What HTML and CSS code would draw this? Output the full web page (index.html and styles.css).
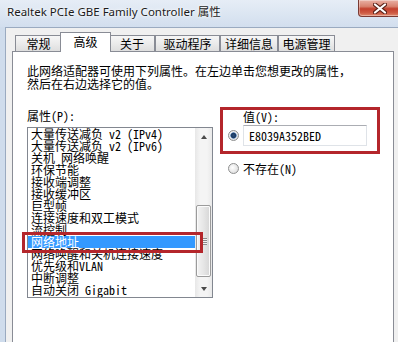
FILE: index.html
```html
<!DOCTYPE html>
<html lang="zh-CN">
<head>
<meta charset="utf-8">
<title>属性</title>
<link rel="stylesheet" href="styles.css">
</head>
<body>
<div class="window">
  <div class="titlebar">
    <span class="title">Realtek PCIe GBE Family Controller 属性</span>
    <div class="close">
      <svg width="14" height="11" viewBox="0 0 14 11">
        <path d="M2,1.5 L12,9.5 M12,1.5 L2,9.5" stroke="#5b2219" stroke-width="4.2" stroke-linecap="round"/>
        <path d="M2,1.5 L12,9.5 M12,1.5 L2,9.5" stroke="#ffffff" stroke-width="2.2" stroke-linecap="round"/>
      </svg>
    </div>
  </div>
  <div class="frame">
    <div class="client">
      <div class="tabs">
        <div class="tab t1">常规</div>
        <div class="tab active t2">高级</div>
        <div class="tab t3">关于</div>
        <div class="tab t4">驱动程序</div>
        <div class="tab t5">详细信息</div>
        <div class="tab t6">电源管理</div>
      </div>
      <div class="panel">
        <p class="desc">此网络适配器可使用下列属性。在左边单击您想更改的属性，<br>然后在右边选择它的值。</p>
        <div class="props">
          <div class="left">
            <div class="label">属性(P):</div>
            <div class="listbox">
              <ul class="items">
                <li>大量传送减负 v2 (IPv4)</li>
                <li>大量传送减负 v2 (IPv6)</li>
                <li>关机 网络唤醒</li>
                <li>环保节能</li>
                <li>接收端调整</li>
                <li>接收缓冲区</li>
                <li>巨型帧</li>
                <li>连接速度和双工模式</li>
                <li>流控制</li>
                <li class="selected">网络地址</li>
                <li>网络唤醒和关机连接速度</li>
                <li>优先级和VLAN</li>
                <li>中断调整</li>
                <li>自动关闭 Gigabit</li>
              </ul>
              <div class="scrollbar">
                <div class="sb-btn"><span class="arrow-up"></span></div>
                <div class="sb-track">
                  <div class="thumb">
                    <span class="grip"></span>
                  </div>
                </div>
                <div class="sb-btn"><span class="arrow-down"></span></div>
              </div>
              <div class="mark-list"></div>
            </div>
          </div>
          <div class="right">
            <div class="valbox">
              <div class="vlabel">值(V):</div>
              <div class="vrow">
                <span class="radio checked"></span>
                <div class="textbox">E8039A352BED</div>
              </div>
            </div>
            <div class="vrow2">
              <span class="radio"></span>
              <span class="vtext">不存在(N)</span>
            </div>
          </div>
        </div>
      </div>
    </div>
  </div>
</div>
</body>
</html>
```
FILE: styles.css
```css
* { box-sizing: border-box; }
html, body { margin: 0; padding: 0; }
body {
  width: 398px;
  height: 342px;
  overflow: hidden;
  background: #f0f0f0;
  font-family: "Noto Sans Mono CJK SC", "Noto Sans CJK SC", sans-serif;
  font-size: 12px;
  color: #000;
}
.window {
  width: 398px;
  height: 342px;
  overflow: hidden;
  display: flex;
  flex-direction: column;
  background: #cfdcec;
}
.titlebar {
  height: 27px;
  flex: none;
  display: flex;
  align-items: flex-start;
  background: linear-gradient(to bottom, #e6edf6 0%, #dce6f2 50%, #d2deee 100%);
  overflow: hidden;
}
.title {
  padding: 4px 0 0 7px;
  font-family: "Noto Sans", "Noto Sans CJK SC", sans-serif;
  font-size: 11.5px;
  line-height: 15px;
  color: #1a1a1a;
  text-shadow: 0 0 4px #fff, 0 0 2px #fff;
  white-space: nowrap;
}
.close {
  margin-left: auto;
  margin-right: -3px;
  width: 43px;
  height: 17px;
  border: 1px solid #7a3a33;
  border-top: none;
  border-radius: 0 0 4px 4px;
  background: linear-gradient(to bottom, #e9b1a5 0%, #d8826f 40%, #c3402d 55%, #cd5a43 80%, #e08a6e 100%);
  display: flex;
  align-items: center;
  justify-content: center;
  box-shadow: inset 0 0 0 1px rgba(255,255,255,0.35);
}
.frame {
  flex: 1;
  display: flex;
  padding-left: 5px;
}
.client {
  flex: 1;
  background: #f0f0f0;
  border-top: 1px solid #9aaac0;
  border-left: 1px solid #9aaac0;
  display: flex;
  flex-direction: column;
}
.tabs {
  position: relative;
  z-index: 2;
  display: flex;
  align-items: flex-end;
  height: 19px;
  margin-top: 4px;
  padding-left: 9px;
}
.tab {
  height: 16px;
  border: 1px solid #898c95;
  border-bottom: none;
  background: linear-gradient(to bottom, #f6f6f6 0%, #ebebeb 50%, #dedede 100%);
  text-align: center;
  line-height: 15px;
  font-size: 12px;
  white-space: nowrap;
}
.tab.active {
  height: 20px;
  margin: 0 -2px -1px -2px;
  background: #ffffff;
  position: relative;
  z-index: 3;
  line-height: 18px;
}
.t1 { width: 47px; }
.t2 { width: 51px; }
.t3 { width: 46px; }
.t4 { width: 65px; }
.t5 { width: 58px; }
.t6 { width: 57px; }
.panel {
  margin: 0 4px 0 6px;
  border: 1px solid #898c95;
  background: #ffffff;
  height: 320px;
  flex: none;
}
.desc {
  margin: 0;
  padding: 12px 0 0 14px;
  line-height: 13px;
  white-space: nowrap;
}
.props {
  display: flex;
  align-items: flex-start;
  margin-top: 19px;
  padding-left: 14px;
}
.left { width: 186px; flex: none; }
.label {
  line-height: 13px;
  margin-bottom: 5px;
}
.listbox {
  position: relative;
  width: 186px;
  height: 171px;
  border: 1px solid #828790;
  display: flex;
  background: #fff;
}
.items {
  flex: 1;
  margin: 0;
  padding: 0;
  list-style: none;
  overflow: hidden;
}
.items li {
  height: 12px;
  line-height: 12px;
  padding-left: 3px;
  white-space: nowrap;
}
.items li.selected {
  background: #3399ff;
  color: #fff;
}
.scrollbar {
  width: 17px;
  flex: none;
  display: flex;
  flex-direction: column;
  background: linear-gradient(to right, #e7e7e7 0%, #f4f4f4 30%, #f4f4f4 70%, #e9e9e9 100%);
}
.sb-btn {
  height: 17px;
  flex: none;
  display: flex;
  align-items: center;
  justify-content: center;
}
.arrow-up {
  width: 0; height: 0;
  border-left: 3.5px solid transparent;
  border-right: 3.5px solid transparent;
  border-bottom: 4px solid #4a4a4a;
}
.arrow-down {
  width: 0; height: 0;
  border-left: 3.5px solid transparent;
  border-right: 3.5px solid transparent;
  border-top: 4px solid #4a4a4a;
}
.sb-track {
  flex: 1;
  padding-top: 60px;
}
.thumb {
  margin: 0 1px;
  height: 72px;
  border: 1px solid #9b9b9b;
  border-radius: 2px;
  background: linear-gradient(to right, #f3f3f3 0%, #e6e6e6 50%, #d6d6d6 100%);
  box-shadow: inset 0 0 0 1px #fbfbfb;
  display: flex;
  align-items: center;
  justify-content: center;
}
.grip {
  width: 7px;
  height: 7px;
  background: repeating-linear-gradient(to bottom, #8a8a8a 0px, #8a8a8a 1px, #f4f4f4 1px, #f4f4f4 2px);
}
.mark-list {
  position: absolute;
  left: -6px;
  top: 104px;
  width: 181px;
  height: 21px;
  border: 3px solid #b4262b;
}
.right {
  margin-left: 7px;
  margin-top: -2px;
}
.valbox {
  width: 160px;
  border: 3px solid #b4262b;
  padding-bottom: 5px;
}
.vlabel {
  padding-left: 20px;
  line-height: 13px;
}
.vrow {
  display: flex;
  align-items: center;
  gap: 4px;
  margin-top: 2px;
  padding-left: 5px;
}
.radio {
  width: 11px;
  height: 11px;
  flex: none;
  border-radius: 50%;
  border: 1px solid #8e8f8f;
  background: radial-gradient(circle at 40% 40%, #ffffff 0%, #e6e6e6 60%, #cfcfcf 100%);
  display: inline-block;
}
.radio.checked {
  background:
    radial-gradient(circle at 50% 50%, #2a4d78 0px, #1b3a62 2.2px, #6f95c2 3px, transparent 3.4px),
    radial-gradient(circle at 40% 40%, #ffffff 0%, #e6e6e6 60%, #cfcfcf 100%);
}
.textbox {
  width: 124px;
  height: 21px;
  border: 1px solid #dfe3e8;
  border-top-color: #abadb3;
  padding-left: 5px;
  line-height: 19px;
  font-size: 12px;
  background: #fff;
}
.vrow2 {
  display: flex;
  align-items: center;
  gap: 4px;
  margin-top: 8px;
  padding-left: 8px;
  line-height: 13px;
}
```
